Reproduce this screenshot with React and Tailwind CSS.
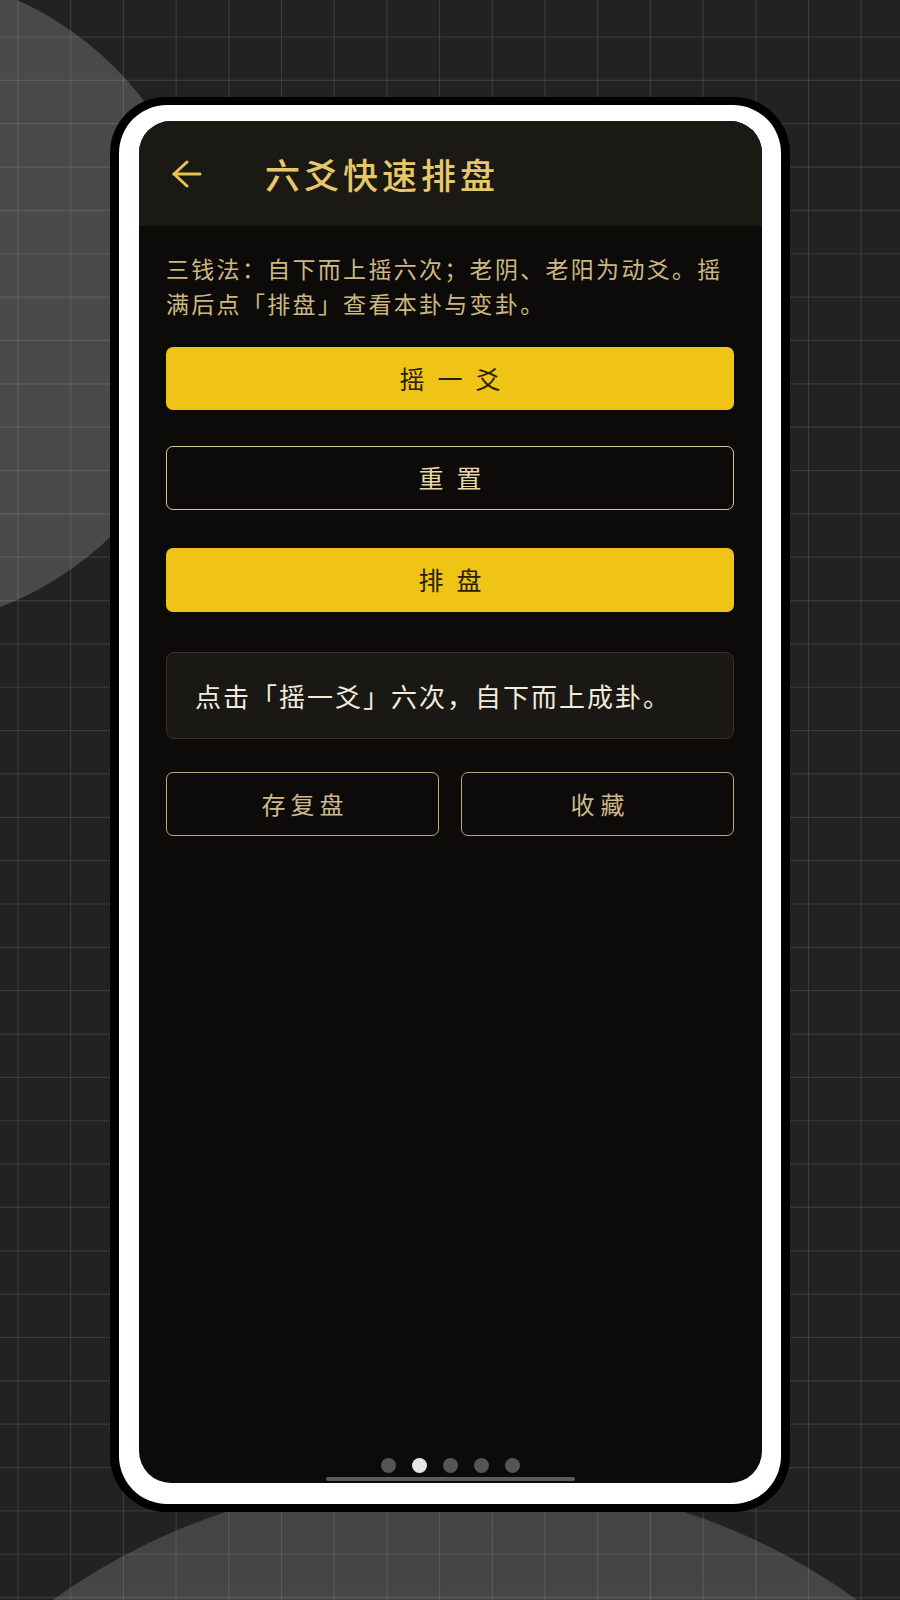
import React from "react";

const cjk = "font-['Noto_Sans_CJK_SC','Noto_Sans',sans-serif]";

function Backdrop() {
  // grid + two soft discs behind the phone
  const cols = Array.from({ length: 18 }, (_, i) => 18 + i * 52.7);
  const rows = Array.from({ length: 38 }, (_, i) => 37 + i * 43.35);
  return (
    <svg className="absolute inset-0" width="900" height="1600" viewBox="0 0 900 1600">
      <defs>
        <linearGradient id="floor" x1="0" y1="0" x2="0" y2="1">
          <stop offset="0" stopColor="#434343" />
          <stop offset="1" stopColor="#5a5650" />
        </linearGradient>
      </defs>
      <rect width="900" height="1600" fill="#222222" />
      <circle cx="-118" cy="300" r="329" fill="#4a4a4a" />
      <ellipse cx="455" cy="1960" rx="600" ry="485" fill="url(#floor)" />
      {cols.map((x) => (
        <line key={"c" + x} x1={x} y1="0" x2={x} y2="1600" stroke="rgba(255,255,255,0.11)" strokeWidth="1.2" />
      ))}
      {rows.map((y) => (
        <line key={"r" + y} x1="0" y1={y} x2="900" y2={y} stroke="rgba(255,255,255,0.11)" strokeWidth="1.2" />
      ))}
    </svg>
  );
}

function BackArrow() {
  return (
    <svg width="30" height="28" viewBox="0 0 30 28" fill="none" stroke="#e9c44c" strokeWidth="3" strokeLinecap="round" strokeLinejoin="round">
      <path d="M15 2 L2 14 L15 26" />
      <path d="M2 14 H28" />
    </svg>
  );
}

export default function App() {
  const dots = [0, 1, 2, 3, 4];

  return (
    <div className={`relative w-[900px] h-[1600px] overflow-hidden bg-[#222222] pt-[97px] pl-[110px] ${cjk}`}>
      <Backdrop />

      {/* phone frame */}
      <div className="relative w-[680px] h-[1415px] bg-black rounded-[56px] p-[8px] pl-[9px] pr-[9px]">
        <div className="h-full bg-white rounded-[48px] pt-[16px] pb-[21px] pl-[20px] pr-[19px]">
          <div className="h-full bg-[#0c0b09] rounded-[32px] overflow-hidden flex flex-col">
            {/* header */}
            <div className="h-[105px] shrink-0 bg-[#1b1914] flex items-center pl-[33px]">
              <BackArrow />
              <h1 className="ml-[63px] text-[35px] leading-none tracking-[4px] font-medium text-[#e6c86a]">六爻快速排盘</h1>
            </div>

            {/* body */}
            <div className="pl-[27px] pr-[28px] pt-[25px]">
              <p className="text-[23px] leading-[35px] tracking-[2.3px] text-[#cdb883]">
                三钱法：自下而上摇六次；老阴、老阳为动爻。摇满后点「排盘」查看本卦与变卦。
              </p>

              <button type="button" className="mt-[26px] w-full h-[63px] rounded-[7px] bg-[#efc416] text-[#2a2008] text-[25px] tracking-[13px] pl-[13px] flex items-center justify-center">
                摇一爻
              </button>

              <button type="button" className="mt-[36px] w-full h-[64px] rounded-[7px] border-[1.5px] border-[#d9c79a] text-[#e8d9a8] text-[25px] tracking-[13px] pl-[13px] flex items-center justify-center">
                重置
              </button>

              <button type="button" className="mt-[38px] w-full h-[64px] rounded-[7px] bg-[#efc416] text-[#2a2008] text-[25px] tracking-[13px] pl-[13px] flex items-center justify-center">
                排盘
              </button>

              <div className="mt-[40px] h-[87px] rounded-[8px] bg-[#1a1814] border border-[#36312a] flex items-center pl-[28px]">
                <span className="text-[26px] tracking-[2px] text-[#f2ecdd]">点击「摇一爻」六次，自下而上成卦。</span>
              </div>

              <div className="mt-[33px] grid grid-cols-2 gap-[22px]">
                <button type="button" className="h-[64px] rounded-[7px] border-[1.5px] border-[#bca97e] text-[#cdb98a] text-[24px] tracking-[5px] pl-[5px] flex items-center justify-center">
                  存复盘
                </button>
                <button type="button" className="h-[64px] rounded-[7px] border-[1.5px] border-[#bca97e] text-[#cdb98a] text-[24px] tracking-[6px] pl-[6px] flex items-center justify-center">
                  收藏
                </button>
              </div>
            </div>

            {/* pager + home bar */}
            <div className="mt-auto flex flex-col items-center">
              <div className="flex items-center gap-[16px]">
                {dots.map((d) => (
                  <span key={d} className={`w-[15px] h-[15px] rounded-full ${d === 1 ? "bg-[#e6e6e6]" : "bg-[#555555]"}`} />
                ))}
              </div>
              <div className="mt-[4px] mb-[2px] w-[249px] h-[4px] rounded-full bg-[#5c5c5c]" />
            </div>
          </div>
        </div>
      </div>
    </div>
  );
}
